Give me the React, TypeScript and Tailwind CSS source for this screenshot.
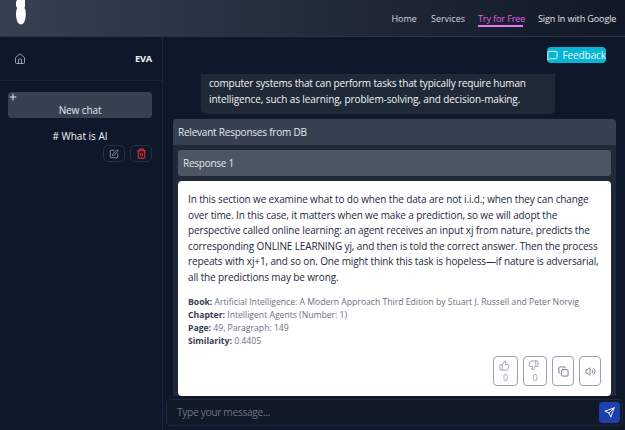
import { House, SquarePen, Trash2, Plus, MessageSquare, ThumbsUp, ThumbsDown, Copy, Volume2 } from "lucide-react";
import { FiSend } from "react-icons/fi";

const answer = [
  "In this section we examine what to do when the data are not i.i.d.; when they can change",
  "over time. In this case, it matters when we make a prediction, so we will adopt the",
  "perspective called online learning: an agent receives an input xj from nature, predicts the",
  "corresponding ONLINE LEARNING yj, and then is told the correct answer. Then the process",
  "repeats with xj+1, and so on. One might think this task is hopeless—if nature is adversarial,",
  "all the predictions may be wrong.",
];

const meta = [
  ["Book:", "Artificial Intelligence: A Modern Approach Third Edition by Stuart J. Russell and Peter Norvig"],
  ["Chapter:", "Intelligent Agents (Number: 1)"],
  ["Page:", "49, Paragraph: 149"],
  ["Similarity:", "0.4405"],
];

function Header() {
  return (
    <header className="flex h-[37px] shrink-0 justify-between border-b border-[#293342] bg-gradient-to-r from-[#374151] to-[#111827]">
      <svg className="ml-[15px] h-[25px] w-3" viewBox="0 0 12 25" fill="#fff">
        <path d="M2 0H10V6L9.500 8C12 12 11 24.500 6 24.500S0 12 2.200 8L1 6V2Z" />
      </svg>
      <nav className="mr-[9px] flex pt-[12px] text-[9px] leading-[14px] tracking-[-0.02px] text-gray-300">
        <span className="w-[39.500px]">Home</span>
        <span className="w-[47px]">Services</span>
        <span className="mr-[15px] h-[14.500px] w-[45px] border-b-2 border-[#e879f9] tracking-[-0.1px] text-[#e160e6]">Try for Free</span>
        <span className="w-[78px] tracking-[-0.1px] text-gray-200">Sign In with Google</span>
      </nav>
    </header>
  );
}

function Sidebar() {
  return (
    <aside className="flex w-[163px] shrink-0 flex-col border-r border-[#1c2638]">
      <div className="flex h-11 shrink-0 items-center justify-between border-b border-[#1c2638] pt-px pr-[10px] pl-[14px]">
        <House className="size-3 text-gray-400" strokeWidth={2} />
        <span className="text-[9.300px] font-bold tracking-[-0.25px] text-gray-100">EVA</span>
      </div>
      <button className="mt-[11px] ml-2 flex h-[26px] w-[144px] flex-col rounded-[4px] bg-[#374151] text-[10px] text-gray-200">
        <Plus className="size-[10px] shrink-0" strokeWidth={2.500} />
        <span className="w-full text-center leading-[17px] tracking-[-0.1px]">New chat</span>
      </button>
      <div className="mt-[11px] w-40 text-center text-[10px] leading-[14px] text-gray-100"># What is AI</div>
      <div className="mt-0.5 ml-[103px] flex gap-[5px]">
        <span className="flex h-[17px] w-[22px] items-center justify-center rounded-[5px] border border-[#263144]">
          <SquarePen className="size-[10px] text-gray-400" />
        </span>
        <span className="flex h-[17px] w-[22px] items-center justify-center rounded-[5px] border border-[#263144]">
          <Trash2 className="size-[11px] text-[#dc2f3a]" strokeWidth={2.400} />
        </span>
      </div>
    </aside>
  );
}

function Actions() {
  const box = "flex h-[30px] flex-col items-center justify-center rounded-[4px] border border-gray-400";
  return (
    <div className="mt-[8px] flex justify-end gap-[5px] pr-[10px] text-[9px] leading-[11px] text-gray-400">
      <span className={`${box} w-[25px]`}>
        <ThumbsUp className="mr-[3px] mb-px size-[11px]" />0
      </span>
      <span className={`${box} w-[24px]`}>
        <ThumbsDown className="mr-[3px] mb-px size-[11px]" />0
      </span>
      <span className={`${box} w-[22px]`}>
        <Copy className="size-[11px] text-gray-500" />
      </span>
      <span className={`${box} w-[22px]`}>
        <Volume2 className="size-[11px] text-gray-500" />
      </span>
    </div>
  );
}

export default function App() {
  return (
    <div className="flex h-[430px] w-[625px] flex-col overflow-hidden bg-[#0f172a] font-['Open_Sans','Noto_Sans',sans-serif] whitespace-nowrap">
      <Header />
      <div className="flex min-h-0 flex-1">
        <Sidebar />
        <main className="flex min-w-0 flex-1 flex-col">
          <div className="flex h-[37px] shrink-0 items-start justify-end pt-[10px] pr-[19px]">
            <button className="flex h-4 w-[59.500px] items-center rounded-[4px] bg-[#06b6d4] pt-px text-[10px] tracking-[-0.1px] text-gray-100">
              <MessageSquare className="mr-[5px] size-[11px] shrink-0" />
              Feedback
            </button>
          </div>
          <div className="ml-[38px] h-[39.500px] w-[354px] shrink-0 rounded-b-[5px] bg-[#1f2937] pt-[2px] pl-2 text-[10px] leading-[15.500px] tracking-[-0.17px] text-gray-100">
            <div>computer systems that can perform tasks that typically require human</div>
            <div className="tracking-[-0.1px]">intelligence, such as learning, problem-solving, and decision-making.</div>
          </div>
          <section className="mt-[5.500px] ml-[10px] flex h-[277px] w-[443px] shrink-0 flex-col rounded-t-[4px] bg-[#1f2937]">
            <h2 className="h-[26px] shrink-0 rounded-t-[4px] border-b border-[#323d4d] bg-[#374151] pl-[5px] text-[10px] leading-[26px] tracking-[-0.22px] text-gray-200">
              Relevant Responses from DB
            </h2>
            <h3 className="mx-[5px] mt-[5px] h-[26px] shrink-0 rounded-[3px] bg-[#4b5563] pl-[5px] text-[10px] leading-[26px] tracking-[-0.25px] text-gray-200">
              Response 1
            </h3>
            <article className="mx-[5px] mt-[5px] flex-1 rounded-[4px] bg-white pt-[11px]">
              <div className="pl-[10px] text-[10px] leading-[15.500px] tracking-[-0.13px] text-gray-800">
                {answer.map((line) => <div key={line}>{line}</div>)}
              </div>
              <div className="mt-[11px] pl-[10px] text-[8.700px] leading-[13px] tracking-[-0.035px] text-gray-500">
                {meta.map(([label, value]) => (
                  <div key={label}><b className="text-gray-700">{label}</b> {value}</div>
                ))}
              </div>
              <Actions />
            </article>
          </section>
          <div className="mt-[3px] ml-[3px] flex h-[27px] w-[457px] shrink-0 items-center justify-between rounded-[5px] border border-[#1f2937] bg-[#111827] pr-[2px] pl-[10px]">
            <span className="pt-px text-[10.300px] tracking-[-0.38px] text-gray-500">Type your message...</span>
            <button className="flex size-[21px] items-center justify-center rounded-[4px] bg-[#1e40af] text-white">
              <FiSend className="size-[11px]" />
            </button>
          </div>
        </main>
      </div>
    </div>
  );
}
